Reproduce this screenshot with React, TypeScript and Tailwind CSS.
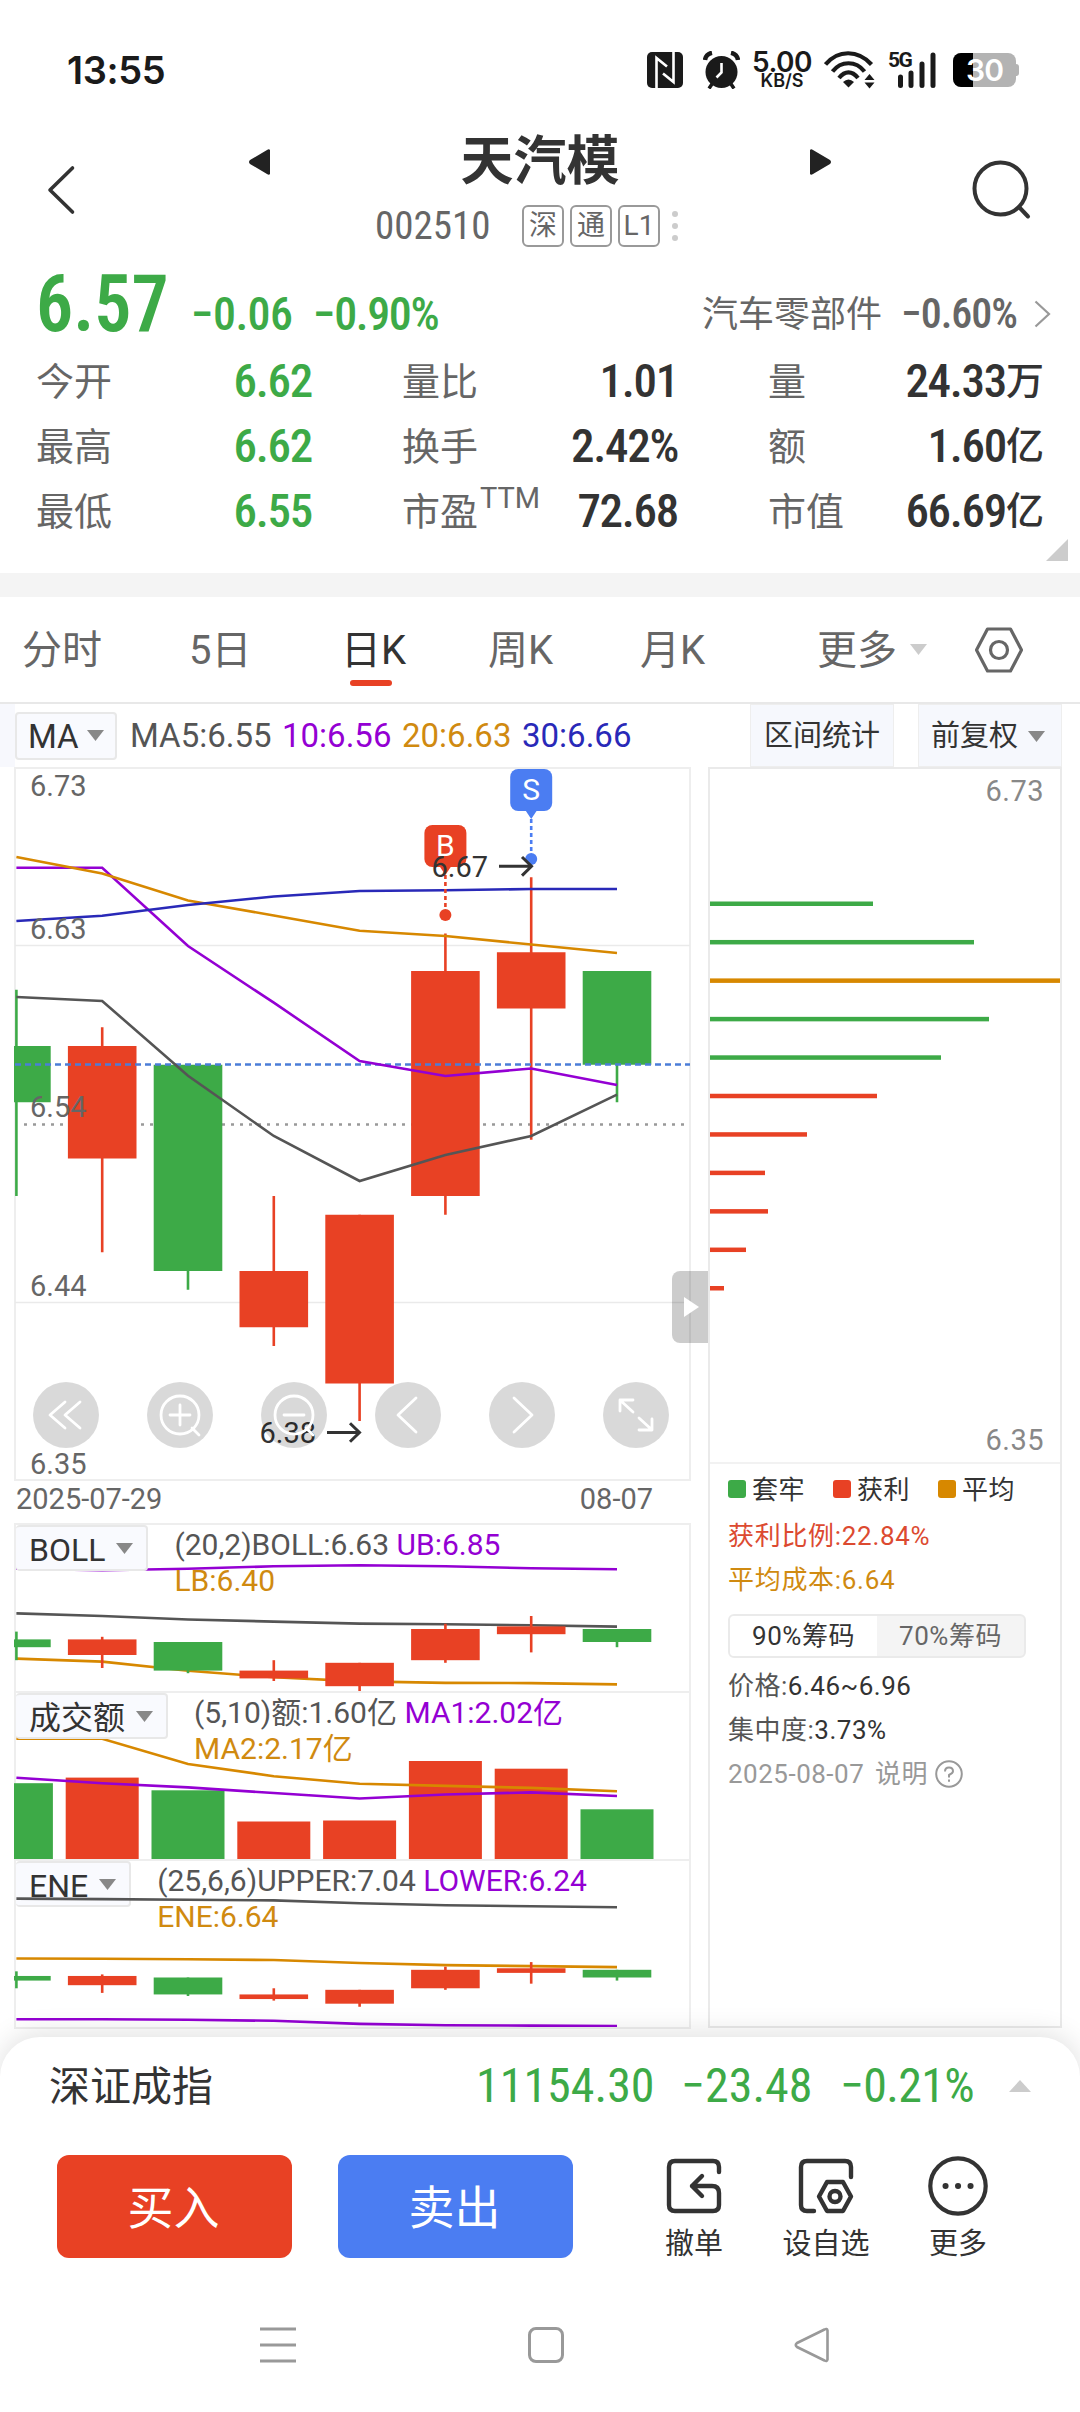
import React from 'react';

const GREEN = '#3daa47';
const RED = '#e84124';
const ORANGE = '#d78800';
const PURPLE = '#9400d3';
const BLUE = '#2929b8';
const GRAY = '#555555';

type Candle = { top: number; bottom: number; high: number; low: number; up: boolean };

const candles: Candle[] = [
  { top: 6.58, bottom: 6.55, high: 6.61, low: 6.5, up: false },
  { top: 6.58, bottom: 6.52, high: 6.59, low: 6.47, up: true },
  { top: 6.57, bottom: 6.46, high: 6.57, low: 6.45, up: false },
  { top: 6.46, bottom: 6.43, high: 6.5, low: 6.42, up: true },
  { top: 6.49, bottom: 6.4, high: 6.49, low: 6.38, up: true },
  { top: 6.62, bottom: 6.5, high: 6.64, low: 6.49, up: true },
  { top: 6.63, bottom: 6.6, high: 6.67, low: 6.53, up: true },
  { top: 6.62, bottom: 6.57, high: 6.62, low: 6.55, up: false },
];

const volumes = [75.8, 81.4, 68.7, 37.5, 38.5, 98, 90.3, 49.7];

const stats = [
  [
    { label: '今开', value: '6.62', green: true },
    { label: '量比', value: '1.01' },
    { label: '量', value: '24.33', unit: '万' },
  ],
  [
    { label: '最高', value: '6.62', green: true },
    { label: '换手', value: '2.42%' },
    { label: '额', value: '1.60', unit: '亿' },
  ],
  [
    { label: '最低', value: '6.55', green: true },
    { label: '市盈', sup: 'TTM', value: '72.68' },
    { label: '市值', value: '66.69', unit: '亿' },
  ],
];

const chips = [
  { len: 163, color: GREEN },
  { len: 264, color: GREEN },
  { len: 350, color: ORANGE },
  { len: 279, color: GREEN },
  { len: 231, color: GREEN },
  { len: 167, color: RED },
  { len: 97, color: RED },
  { len: 55, color: RED },
  { len: 58, color: RED },
  { len: 36, color: RED },
  { len: 14, color: RED },
];

// x centre of the i-th trading day
const cx = (i: number) => 2.4 + i * 85.8;

function Candles({ y }: { y: (p: number) => number }) {
  return (
    <>
      {candles.map((c, i) => (
        <g key={i} fill={c.up ? RED : GREEN}>
          <rect x={cx(i) - 1.3} y={y(c.high)} width={2.6} height={y(c.low) - y(c.high)} />
          <rect x={cx(i) - 34.3} y={y(c.top)} width={68.6} height={y(c.bottom) - y(c.top)} />
        </g>
      ))}
    </>
  );
}

function Line({ ys, color }: { ys: number[]; color: string }) {
  return (
    <polyline
      points={ys.map((y, i) => `${cx(i)},${y}`).join(' ')}
      fill="none"
      stroke={color}
      strokeWidth={2.6}
    />
  );
}

function Caret({ className = '' }: { className?: string }) {
  return (
    <svg className={className} width="17" height="11" viewBox="0 0 17 11" fill="currentColor">
      <path d="M0 0H17L8.5 11Z" />
    </svg>
  );
}

function Num({ className = '', children }: { className?: string; children: React.ReactNode }) {
  return (
    <span className={`[font-family:'Roboto_Condensed',Roboto,'Noto_Sans_CJK_SC',sans-serif] whitespace-nowrap ${className}`}>
      {children}
    </span>
  );
}

function StatusBar() {
  return (
    <div className="h-[115px] pt-[24px] flex items-center text-[#1a1a1a]">
      <span className="ml-[67px] w-[580px] text-[38px] font-semibold leading-none tracking-[-0.4px] [font-family:Inter,sans-serif]">13:55</span>
      <svg width="36" height="36" viewBox="0 0 36 36">
        <rect width="36" height="36" rx="5" fill="currentColor" />
        <path d="M9.5 36V6L20 14.5M26.5 0V30L16 21.5" fill="none" stroke="#fff" strokeWidth="2.6" />
      </svg>
      <svg className="ml-[20px]" width="37" height="38" viewBox="0 0 37 38">
        <circle cx="18.5" cy="21" r="16" fill="currentColor" />
        <path d="M2 9Q3 3 9 1.8M35 9Q34 3 28 1.8" fill="none" stroke="currentColor" strokeWidth="4.5" />
        <path d="M9 33L6 37.5M28 33L31 37.5" stroke="currentColor" strokeWidth="3.5" />
        <path d="M18.5 12V21.5L13.5 26.5" fill="none" stroke="#fff" strokeWidth="2.6" />
      </svg>
      <div className="ml-[13px] w-[58px] flex flex-col items-center font-semibold [font-family:Inter,sans-serif]">
        <span className="text-[28px] leading-[22px] tracking-[-0.5px]">5.00</span>
        <span className="text-[18px] leading-[16px]">KB/S</span>
      </div>
      <svg className="ml-[13px]" width="51" height="38" viewBox="0 0 51 38" fill="none" stroke="currentColor" strokeWidth="4.2">
        <path d="M1.5 13.5C14 -1.5 34 -1.5 47.5 13.5" />
        <path d="M8.5 20.5C17 9.5 32 9.5 40.5 20.5" />
        <path d="M15 27C21 19.5 28 19.5 34 27" />
        <path d="M19 31Q24.5 26 30 31L24.5 36.5Z" fill="currentColor" stroke="none" />
        <path d="M40.5 29L45.5 23L50.5 29ZM40.5 31.5L45.5 37.5L50.5 31.5Z" fill="currentColor" stroke="none" />
      </svg>
      <div className="ml-[13px] relative w-[48px] h-[38px]">
        <span className="absolute left-0 top-0 text-[21px] leading-[18px] font-bold tracking-[-1.5px] [font-family:Roboto,sans-serif]">5G</span>
        <svg width="48" height="38" viewBox="0 0 48 38" stroke="currentColor" strokeWidth="5" strokeLinecap="round">
          <path d="M12.5 26V34.5M23 22V34.5M34 13V34.5M45 4V34.5" />
        </svg>
      </div>
      <div className="ml-[17px] relative w-[63px] h-[34px] rounded-[8px] overflow-hidden bg-[#b3b3b3]">
        <div className="w-[20px] h-full bg-black" />
        <span className="absolute inset-0 text-center text-[30px] leading-[35px] font-semibold tracking-[-1px] text-white [font-family:Inter,sans-serif]">30</span>
      </div>
      <div className="w-[3px] h-[12px] bg-[#b3b3b3] rounded-r-[3px]" />
    </div>
  );
}

function Header() {
  return (
    <div className="h-[150px] flex items-center">
      <div className="w-[249px] pl-[46px]">
        <svg width="30" height="50" viewBox="0 0 30 50" fill="none" stroke="#333" strokeWidth="3.6" strokeLinejoin="round" strokeLinecap="round">
          <path d="M26.5 3L4 25L26.5 47" />
        </svg>
      </div>
      <div className="w-[582px] mb-[16px]">
        <div className="h-[88px] flex items-center justify-between">
          <svg className="mt-[6px]" width="21" height="26" viewBox="0 0 21 26" fill="#222">
            <path d="M21 1V25Q20 26.5 18 25L1 15Q-1 13 1 11L18 1Q20 -0.5 21 1Z" />
          </svg>
          <h1 className="mt-[6px] text-[53px] leading-none font-bold text-[#333]">天汽模</h1>
          <svg className="mt-[6px]" width="21" height="26" viewBox="0 0 21 26" fill="#222">
            <path d="M0 1V25Q1 26.5 3 25L20 15Q22 13 20 11L3 1Q1 -0.5 0 1Z" />
          </svg>
        </div>
        <div className="h-[46px] flex items-center pl-[126px] text-[#666]">
          <Num className="w-[147px] text-[39px] leading-none">002510</Num>
          <div className="flex gap-[6px] text-[28px] leading-[38px] text-center">
            {['深', '通', 'L1'].map((t) => (
              <span key={t} className="w-[42px] h-[42px] border-2 border-[#999] rounded-[6px]">{t}</span>
            ))}
          </div>
          <div className="ml-[12px] flex flex-col gap-[6px]">
            {[0, 1, 2].map((i) => (
              <span key={i} className="w-[6px] h-[6px] rounded-full bg-[#ccc]" />
            ))}
          </div>
        </div>
      </div>
      <svg className="ml-[141px]" width="62" height="62" viewBox="0 0 62 62" fill="none" stroke="#333" strokeWidth="4" strokeLinecap="round">
        <circle cx="28.5" cy="29.5" r="26" />
        <path d="M47 48L56 57.5" />
      </svg>
    </div>
  );
}

function Quote() {
  return (
    <>
      <div className="h-[83px] flex items-center">
        <Num className="ml-[36px] w-[155px] mt-[-5px] origin-left scale-x-[0.925] text-[80px] leading-none font-semibold text-[#3daa47]">6.57</Num>
        <Num className="w-[122px] mt-[14px] text-[46px] leading-none font-medium tracking-[-0.6px] text-[#3daa47]">−0.06</Num>
        <Num className="w-[389px] mt-[14px] text-[46px] leading-none font-medium tracking-[-1.4px] text-[#3daa47]">−0.90%</Num>
        <span className="w-[199px] mt-[16px] text-[36px] leading-none text-[#666]">汽车零部件</span>
        <Num className="w-[133px] mt-[15px] text-[42px] leading-none font-medium tracking-[-1px] text-[#666]">−0.60%</Num>
        <svg className="mt-[15px]" width="17" height="28" viewBox="0 0 17 28" fill="none" stroke="#999" strokeWidth="2.2">
          <path d="M1.5 1.5L15 14L1.5 26.5" />
        </svg>
      </div>
      <div className="h-[225px] pl-[36px] relative">
        {stats.map((row, i) => (
          <div key={i} className="h-[65px] flex gap-[90px]">
            {row.map((s) => (
              <div key={s.label} className="w-[276px] flex items-center justify-between">
                <span className="mt-[3px] text-[38px] leading-none text-[#666] flex">
                  {s.label}
                  {s.sup && <span className="text-[29px] leading-none mt-[-9px] ml-[2px]">{s.sup}</span>}
                </span>
                <span className={s.green ? 'flex items-center text-[#3daa47]' : 'flex items-center text-[#333]'}>
                  <Num className="text-[47px] leading-none font-medium tracking-[-1.3px]">{s.value}</Num>
                  {s.unit && <span className="text-[38px] leading-none font-medium">{s.unit}</span>}
                </span>
              </div>
            ))}
          </div>
        ))}
        <svg className="absolute right-[12px] bottom-[12px]" width="22" height="22" viewBox="0 0 22 22" fill="#ccc">
          <path d="M22 0V22H0Z" />
        </svg>
      </div>
    </>
  );
}

function Tabs() {
  return (
    <div className="h-[107px] flex items-center text-[40px] leading-none text-[#666] border-b-2 border-[#e8e8e8]">
      <span className="mt-[3px] ml-[22px] w-[167px]">分时</span>
      <span className="mt-[3px] w-[152px]">5日</span>
      <span className="mt-[3px] w-[147px] relative text-[#333]">
        日K
        <span className="absolute left-[9px] top-[49px] w-[42px] h-[6px] rounded-full bg-[#e84124]" />
      </span>
      <span className="mt-[3px] w-[152px]">周K</span>
      <span className="mt-[3px] w-[177px]">月K</span>
      <span className="mt-[3px] w-[93px]">更多</span>
      <Caret className="text-[#ccc]" />
      <svg className="ml-[48px]" width="48" height="46" viewBox="0 0 48 46" fill="none" stroke="#666" strokeWidth="3.2" strokeLinejoin="round">
        <path d="M12.5 2H35.5L46.5 23L35.5 44H12.5L1.5 23Z" />
        <circle cx="24" cy="23" r="8.5" />
      </svg>
    </div>
  );
}

function MaBar() {
  return (
    <div className="h-[63px] flex items-center text-[33px] leading-none whitespace-nowrap">
      <div className="w-[15px] h-full bg-[#f7f8fd]" />
      <div className="w-[102px] h-[48px] pl-[11px] flex items-center gap-[8px] border-2 border-[#e8e8e8] rounded-[4px] bg-[#f9fafe] text-[33px] text-[#333]">
        <span className="pt-[2px]">MA</span>
        <Caret className="text-[#888]" />
      </div>
      <span className="ml-[13px] w-[152px] text-[#555]">MA5:6.55</span>
      <span className="w-[120px] text-[#9400d3]">10:6.56</span>
      <span className="w-[120px] text-[#d08a10]">20:6.63</span>
      <span className="w-[228px] text-[#2929b8]">30:6.66</span>
      <div className="w-[144px] h-full pt-[2px] flex items-center justify-center bg-[#f6f8fd] border border-[#eee] text-[29px] text-[#333]">区间统计</div>
      <div className="ml-[24px] w-[144px] h-full pt-[2px] pr-[4px] flex items-center justify-center gap-[10px] bg-[#f6f8fd] border border-[#eee] text-[29px] text-[#333]">
        前复权
        <Caret className="text-[#888]" />
      </div>
    </div>
  );
}

function Marker({ x, top, text, color }: { x: number; top: number; text: string; color: string }) {
  return (
    <g fill={color}>
      <rect x={x - 21} y={top} width={42} height={42} rx={8} />
      <path d={`M${x - 6} ${top + 41}H${x + 6}L${x} ${top + 50}Z`} />
      <path d={`M${x} ${top + 50}V${top + 86}`} stroke={color} strokeWidth={2.6} strokeDasharray="4 3" />
      <circle cx={x} cy={top + 90} r={6} />
      <text x={x} y={top + 31} fill="#fff" fontSize={30} textAnchor="middle">{text}</text>
    </g>
  );
}

const controls = [
  'M32 20L17 33L32 46M47 20L32 33L47 46',
  'M33 23V43M23 33H43M45 46L52 53M52 33A19 19 0 1 1 14 33A19 19 0 1 1 52 33',
  'M23 33H43M45 46L52 53M52 33A19 19 0 1 1 14 33A19 19 0 1 1 52 33',
  'M41 16L23 33L41 50',
  'M25 16L43 33L25 50',
  'M17 29V18H30M18 19L30 30M49 37V48H36M48 47L36 36',
];

function MainChart() {
  return (
    <div className="relative h-[714px]">
      <svg className="block text-[29px]" width="677" height="714" viewBox="0 0 677 714">
        <rect x="1" y="1" width="675" height="712" fill="none" stroke="#eee" strokeWidth="2" />
        <path d="M1 178.5H676M1 535.5H676" stroke="#eaeaea" strokeWidth="1.5" />
        <path d="M10 357.5H672" stroke="#999" strokeWidth="2.6" strokeDasharray="3 6" />
        <Candles y={(p) => 204 + (6.62 - p) * 1875} />
        <path d="M1 297.5H676" stroke="#4b7dd8" strokeWidth="2.4" strokeDasharray="6 4" />
        <Line ys={[230, 234, 308.7, 369, 414, 388, 369, 327.7]} color={GRAY} />
        <Line ys={[100.7, 100.7, 179, 235.7, 294, 309, 301.5, 318]} color={PURPLE} />
        <Line ys={[90, 106.5, 133.5, 148.5, 163.7, 169, 177.5, 186]} color={ORANGE} />
        <Line ys={[154, 148.7, 138, 129.5, 124, 123.3, 122, 122]} color={BLUE} />
        <g fill="#666">
          <text x="16" y="29">6.73</text>
          <text x="16" y="171.5">6.63</text>
          <text x="16" y="349.5">6.54</text>
          <text x="16" y="528.5">6.44</text>
          <text x="16" y="707">6.35</text>
        </g>
        <Marker x={431.4} top={58} text="B" color={RED} />
        <Marker x={517.2} top={2} text="S" color="#4b7df2" />
        <g fill="#333">
          <text x="417.5" y="109.7">6.67</text>
          <text x="245.5" y="676">6.38</text>
        </g>
        <path d="M485 99.3H517M508 90L517.5 99.3L508 108.6M313 665.5H345M336 656.2L345.5 665.5L336 674.8" fill="none" stroke="#333" strokeWidth="3" />
      </svg>
      <div className="absolute left-[19px] top-[615px] flex gap-[48px]">
        {controls.map((d, i) => (
          <svg key={i} className="rounded-full bg-black/15" width="66" height="66" viewBox="0 0 66 66" fill="none" stroke="#fff" strokeWidth="2.8" strokeLinecap="round" strokeLinejoin="round">
            <path d={d} />
          </svg>
        ))}
      </div>
      <div className="absolute left-[658px] top-[504px] w-[36px] h-[72px] pl-[12px] flex items-center rounded-l-[8px] bg-black/20">
        <svg width="15" height="20" viewBox="0 0 15 20" fill="#fff">
          <path d="M0 0L15 10L0 20Z" />
        </svg>
      </div>
    </div>
  );
}

type PanelProps = {
  name: string;
  main: string;
  second: string;
  third: string;
  behind?: boolean;
  children: React.ReactNode;
};

// behind: the name tag sits under the plotted lines
function Panel({ name, main, second, third, behind, children }: PanelProps) {
  return (
    <div className="relative h-[168px] border-x-2 border-t-2 border-[#eee] leading-none whitespace-nowrap">
      <svg className={behind ? 'absolute -left-[2px] -top-[2px] z-10' : 'absolute -left-[2px] -top-[2px]'} width="677" height="168" viewBox="0 0 677 168">
        {children}
      </svg>
      <div className="relative flex items-start">
        <div className="h-[46px] px-[13px] flex items-center gap-[11px] border-2 border-l-0 border-[#e8e8e8] rounded-[4px] bg-[#f9fafe] text-[32px] text-[#333]">
          <span className="pt-[4px]">{name}</span>
          <Caret className="text-[#888]" />
        </div>
        <div className="ml-[26px] pt-[2px] text-[30px] leading-[35.5px]">
          <span className="text-[#555]">{main}</span> <span className="text-[#9400d3]">{second}</span>
          <div className="text-[#d08a10]">{third}</div>
        </div>
      </div>
    </div>
  );
}

function ChipPanel() {
  return (
    <div className="ml-[17px] w-[354px] h-[1261px] border-2 border-[#eaeaea] text-[26px] leading-none text-[#333] tracking-[0.5px]">
      <div className="relative h-[695px] border-b-2 border-[#f2f2f2] text-[29px] text-[#888]">
        <span className="absolute right-[16px] top-[8px]">6.73</span>
        <span className="absolute right-[16px] bottom-[7px]">6.35</span>
        <svg className="block" width="350" height="690" viewBox="0 0 350 690">
          {chips.map((c, i) => (
            <rect key={i} y={132.5 + i * 38.45} width={c.len} height={4.5} fill={c.color} />
          ))}
        </svg>
      </div>
      <div className="pl-[18px]">
        <div className="h-[50px] flex items-center">
          <span className="w-[18px] h-[18px] mr-[6px] rounded-[3px] bg-[#3daa47]" />
          <span className="mt-[2px] w-[81px]">套牢</span>
          <span className="w-[18px] h-[18px] mr-[6px] rounded-[3px] bg-[#e84124]" />
          <span className="mt-[2px] w-[81px]">获利</span>
          <span className="w-[18px] h-[18px] mr-[6px] rounded-[3px] bg-[#d78800]" />
          <span className="mt-[2px]">平均</span>
        </div>
        <div className="h-[44px] flex items-center tracking-[0.7px] text-[#dc4a30]">获利比例:22.84%</div>
        <div className="h-[44px] flex items-center tracking-[0.7px] text-[#d08a10]">平均成本:6.64</div>
        <div className="mt-[12px] w-[298px] h-[44px] flex border-2 border-[#eaeaea] rounded-[6px] bg-[#f4f4f4] overflow-hidden">
          <div className="flex-1 flex items-center justify-center bg-white">90%筹码</div>
          <div className="flex-1 flex items-center justify-center text-[#666]">70%筹码</div>
        </div>
        <div className="h-[44px] mt-[6px] flex items-center"><span className="text-[#555]">价格:</span>6.46~6.96</div>
        <div className="h-[44px] flex items-center"><span className="text-[#555]">集中度:</span>3.73%</div>
        <div className="h-[44px] flex items-center text-[#999]">
          <span className="w-[147px]">2025-08-07</span>说明
          <svg className="ml-[7px]" width="28" height="28" viewBox="0 0 28 28" fill="none" stroke="#999" strokeWidth="2">
            <circle cx="14" cy="14" r="12.8" />
            <path d="M10 11.5Q10 7.5 14 7.5T18 11.2Q18 13 14 15V17.5M14 19.5V21.8" />
          </svg>
        </div>
      </div>
    </div>
  );
}

function Charts() {
  return (
    <div className="h-[1270px] flex">
      <div className="ml-[14px] w-[677px]">
        <MainChart />
        <div className="h-[42px] pb-[6px] pl-[2px] pr-[38px] flex items-center justify-between text-[29px] leading-none text-[#666]">
          <span>2025-07-29</span>
          <span>08-07</span>
        </div>
        <Panel name="BOLL" main="(20,2)BOLL:6.63" second="UB:6.85" third="LB:6.40">
          <Line ys={[45.8, 47.3, 45.8, 43.3, 42.3, 43.3, 45.3, 46.3]} color={PURPLE} />
          <Line ys={[90.4, 93, 96.5, 98.6, 100.6, 101.3, 102.3, 103.6]} color={GRAY} />
          <Line ys={[135.6, 138.6, 147.8, 154.3, 158.4, 159.9, 160.1, 161.4]} color={ORANGE} />
          <Candles y={(p) => 106 + (6.62 - p) * 260} />
        </Panel>
        <Panel name="成交额" main="(5,10)额:1.60亿" second="MA1:2.02亿" third="MA2:2.17亿">
          {volumes.map((v, i) => (
            <rect key={i} x={cx(i) - 36.5} y={168 - v} width={73} height={v} fill={candles[i].up ? RED : GREEN} />
          ))}
          <Line ys={[47.7, 47.7, 73, 85.2, 92.8, 94.9, 96.9, 100.2]} color={ORANGE} />
          <Line ys={[86.7, 92.3, 96.4, 102, 107.5, 103.5, 101.4, 105]} color={PURPLE} />
        </Panel>
        <Panel name="ENE" main="(25,6,6)UPPER:7.04" second="LOWER:6.24" third="ENE:6.64" behind>
          <Line ys={[39.6, 40.1, 40.7, 41.4, 44.2, 46.2, 47.2, 48.3]} color={GRAY} />
          <Line ys={[99.5, 99.8, 100.3, 101, 104, 106.1, 107.1, 108.1]} color={ORANGE} />
          <Line ys={[160.3, 160.3, 160.8, 161.8, 164.9, 166.2, 166.6, 167]} color={PURPLE} />
          <Candles y={(p) => 110.8 + (6.62 - p) * 154} />
        </Panel>
        <div className="h-[2px] bg-[#eee]" />
      </div>
      <ChipPanel />
    </div>
  );
}

function BottomSheet() {
  return (
    <div className="relative z-20 h-[375px] rounded-t-[40px] bg-white shadow-[0_-4px_28px_rgba(0,0,0,0.12)]">
      <div className="h-[98px] flex items-center">
        <span className="mt-[3px] ml-[49px] w-[427px] text-[41px] leading-none text-[#333]">深证成指</span>
        <Num className="w-[205px] text-[48px] leading-none text-[#3daa47]">11154.30</Num>
        <Num className="w-[159px] text-[48px] leading-none text-[#3daa47]">−23.48</Num>
        <Num className="w-[169px] text-[48px] leading-none tracking-[-0.7px] text-[#3daa47]">−0.21%</Num>
        <svg width="22" height="12" viewBox="0 0 22 12" fill="#ccc">
          <path d="M11 0L22 12H0Z" />
        </svg>
      </div>
      <div className="mt-[20px] pl-[57px] flex text-[#333]">
        <button className="w-[235px] h-[103px] pt-[3px] pr-[2px] rounded-[12px] bg-[#e84124] text-[46px] text-white">买入</button>
        <button className="ml-[46px] w-[235px] h-[103px] pt-[3px] pr-[2px] rounded-[12px] bg-[#4b7df2] text-[46px] text-white">卖出</button>
        <div className="ml-[72px] w-[98px] flex flex-col items-center text-[29px] leading-none">
          <svg width="60" height="61" viewBox="0 0 60 61" fill="none" stroke="currentColor" strokeWidth="4.4" strokeLinecap="round" strokeLinejoin="round">
            <path d="M55 17V12Q55 6 49 6H11Q5 6 5 12V50Q5 56 11 56H49Q55 56 55 50V38Q55 31 48 31H28M38 21L28 31L38 41" />
          </svg>
          <span className="mt-[14px]">撤单</span>
        </div>
        <div className="ml-[34px] w-[98px] flex flex-col items-center text-[29px] leading-none">
          <svg width="60" height="61" viewBox="0 0 60 61" fill="none" stroke="currentColor" strokeWidth="4.4" strokeLinecap="round" strokeLinejoin="round">
            <path d="M55 22V12Q55 6 49 6H11Q5 6 5 12V50Q5 56 11 56H18" />
            <path d="M31 27H47L55 41.5L47 56H31L23 41.5Z" />
            <circle cx="39" cy="41.5" r="5.5" />
          </svg>
          <span className="mt-[14px]">设自选</span>
        </div>
        <div className="ml-[34px] w-[98px] flex flex-col items-center text-[29px] leading-none">
          <svg width="60" height="61" viewBox="0 0 60 61" fill="none" stroke="currentColor" strokeWidth="4.2">
            <circle cx="30" cy="31" r="27.7" />
            <path d="M17.5 31H17.6M30 31H30.1M42.500 31H42.600" strokeWidth="6" strokeLinecap="round" />
          </svg>
          <span className="mt-[14px]">更多</span>
        </div>
      </div>
      <div className="mt-[67px] h-[38px] pl-[260px] flex items-center">
        <svg width="36" height="36" viewBox="0 0 36 36" stroke="#999" strokeWidth="3">
          <path d="M0 2H36M0 18H36M0 34H36" />
        </svg>
        <div className="ml-[232px] w-[36px] h-[36px] border-[3px] border-[#999] rounded-[8px]" />
        <svg className="ml-[230px]" width="36" height="36" viewBox="0 0 36 36" fill="none" stroke="#999" strokeWidth="2.6" strokeLinejoin="round">
          <path d="M33.5 3.5V32.5Q33 35 30.5 33.5L3 20Q0.5 18 3 16L30.5 2.5Q33 1 33.5 3.5Z" />
        </svg>
      </div>
    </div>
  );
}

export default function App() {
  return (
    <div className="w-[1080px] h-[2412px] overflow-hidden bg-white [font-family:Roboto,'Noto_Sans_CJK_SC',sans-serif]">
      <StatusBar />
      <Header />
      <Quote />
      <div className="h-[24px] bg-[#f4f4f4]" />
      <Tabs />
      <MaBar />
      <Charts />
      <BottomSheet />
    </div>
  );
}
